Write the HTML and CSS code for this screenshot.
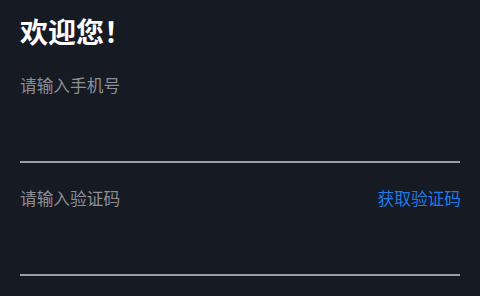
FILE: index.html
```html
<!DOCTYPE html>
<html lang="zh-CN">
<head>
    <meta charset="UTF-8">
    <title>登录</title>
    <link rel="stylesheet" href="styles.css">
</head>
<body>
    <div class="login-wrapper">
        <h1 class="title">欢迎您！</h1>

        <div class="field">
            <div class="field-row">
                <span class="field-label">请输入手机号</span>
            </div>
        </div>

        <div class="field">
            <div class="field-row">
                <span class="field-label">请输入验证码</span>
                <a href="#" class="code-link">获取验证码</a>
            </div>
        </div>
    </div>
</body>
</html>
```

FILE: styles.css
```css
* {
    margin: 0;
    padding: 0;
    box-sizing: border-box;
}

html, body {
    height: 100%;
}

body {
    background: #161a23;
    font-family: "Noto Sans CJK SC", "Noto Sans", sans-serif;
    color: #ffffff;
    overflow: hidden;
}

.login-wrapper {
    display: flex;
    flex-direction: column;
    padding: 0 20px;
}

.title {
    margin-top: 13px;
    font-size: 28px;
    line-height: 36px;
    font-weight: 700;
    color: #ffffff;
}

.field {
    margin-top: 23px;
    height: 90px;
    border-bottom: 2px solid #9b9da2;
}

.title + .field {
    margin-top: 24px;
}

.field-row {
    display: flex;
    justify-content: space-between;
    align-items: center;
    height: 24px;
}

.field-label {
    font-size: 16.7px;
    line-height: 24px;
    color: #8d8f94;
}

.code-link {
    font-size: 16.7px;
    line-height: 24px;
    color: #1f7ae8;
    text-decoration: none;
    margin-right: -1px;
}
```
